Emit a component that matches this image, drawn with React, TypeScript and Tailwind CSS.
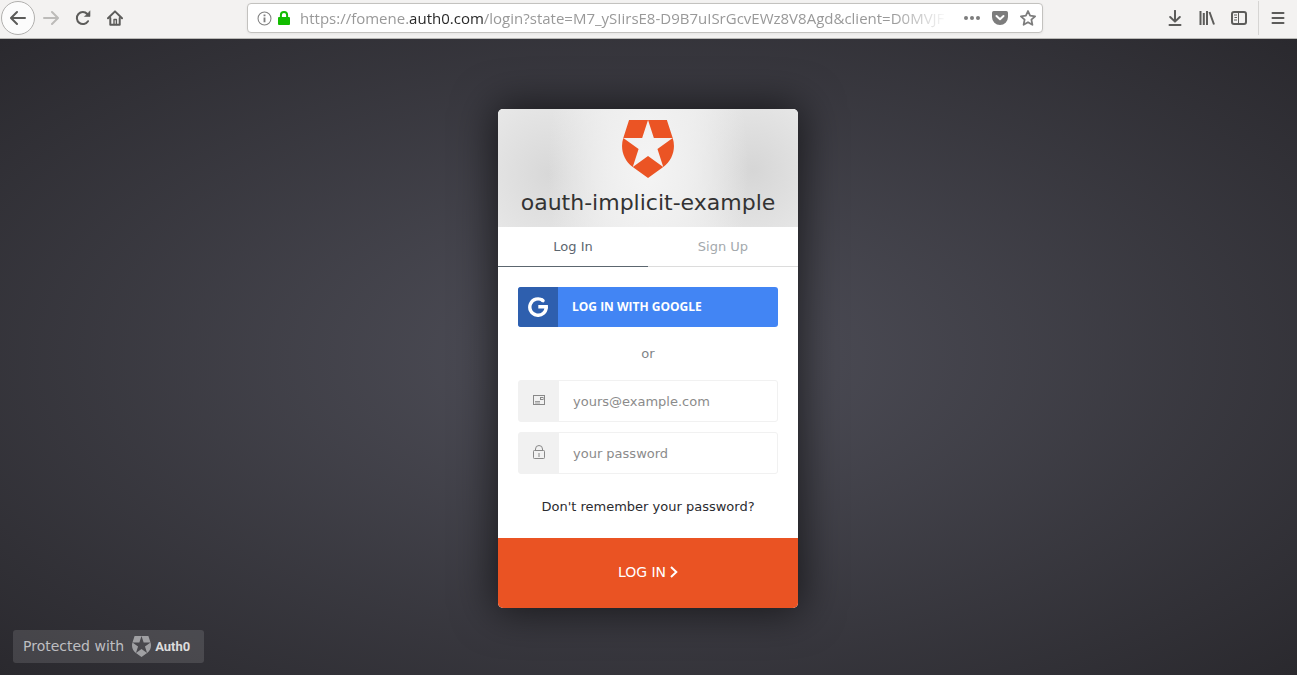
import React from "react";

function Auth0Mark({ className }: { className: string }) {
  return (
    <svg viewBox="1.5 0 21 24" preserveAspectRatio="none" fill="currentColor" className={className} aria-hidden="true">
      <path d="M21.98 7.448L19.62 0H4.347L2.02 7.448c-1.352 4.312.03 9.206 3.815 12.015L12.007 24l6.157-4.552c3.755-2.81 5.182-7.688 3.815-12.015l-6.16 4.58 2.343 7.45-6.157-4.597-6.158 4.58 2.358-7.433-6.188-4.55 7.63-.045L12.008 0l2.356 7.404 7.615.044z" />
    </svg>
  );
}

function ToolbarButton({ label, className = "", children }: { label: string; className?: string; children: React.ReactNode }) {
  return (
    <button type="button" aria-label={label} className={`flex h-8 w-8 shrink-0 items-center justify-center ${className}`}>
      <svg viewBox="0 0 16 16" className="h-4 w-4" fill="none" stroke="currentColor" strokeWidth="2" strokeLinecap="round" strokeLinejoin="round" aria-hidden="true">
        {children}
      </svg>
    </button>
  );
}

function BrowserToolbar() {
  return (
    <header className="flex h-[39px] items-center border-b border-[#b9b9b6] bg-[#f3f2f1] pb-[2px] text-[#5c5c5a]">
      <nav aria-label="Navigation" className="flex shrink-0 items-center pl-px">
        <button type="button" aria-label="Back" className="flex h-[34px] w-[34px] items-center justify-center rounded-full border border-[#b1b0ae] bg-[#fcfcfc]">
          <svg viewBox="0 0 16 16" className="h-4 w-4" fill="none" stroke="currentColor" strokeWidth="2" strokeLinecap="round" strokeLinejoin="round" aria-hidden="true">
            <path d="M15 8H1.5M7 2L1 8l6 6" />
          </svg>
        </button>
        <ToolbarButton label="Forward" className="text-[#bcbbb9]">
          <path d="M1 8h13.5M9 2l6 6-6 6" />
        </ToolbarButton>
        <ToolbarButton label="Reload">
          <path d="M13 11.2A6 6 0 1 1 12.3 4" />
          <path d="M15 1.2V6.5H9.8z" fill="currentColor" strokeWidth="0.6" />
        </ToolbarButton>
        <ToolbarButton label="Home">
          <path d="M1 8.3L8 1.4l7 6.9" />
          <path d="M3.3 8v6.8h9.4V8" />
          <path d="M7 14.5v-5h2.4v5" strokeWidth="1.4" />
        </ToolbarButton>
      </nav>

      <div className="mr-29 ml-29 flex h-[30px] min-w-0 flex-1 items-center rounded-[4px] border border-[#c3c2bf] bg-white pr-[6px] pl-[9px] shadow-[0_1px_3px_rgba(0,0,0,0.06)]">
        <svg viewBox="0 0 16 16" className="h-[15px] w-[15px] shrink-0 text-[#808080]" fill="none" stroke="currentColor" strokeWidth="1.1" aria-hidden="true">
          <circle cx="8" cy="8" r="6.9" />
          <path d="M8 7v5M8 3.7v2" strokeWidth="2" />
        </svg>
        <svg viewBox="0 0 12 14" className="mx-[6px] h-[14px] w-3 shrink-0" aria-hidden="true">
          <rect x="0" y="6" width="12" height="8" rx="1" fill="#12bc00" />
          <path d="M2.9 7V4.1a3.1 3.1 0 0 1 6.2 0V7" fill="none" stroke="#12bc00" strokeWidth="2" />
        </svg>
        <div
          role="textbox"
          aria-label="Address"
          tabIndex={0}
          className="mr-2 ml-1 min-w-0 flex-1 overflow-hidden whitespace-nowrap font-['Open_Sans',sans-serif] text-[15px] leading-5 text-[#999999] [mask-image:linear-gradient(to_left,transparent_8px,black_64px)]"
        >
          https://fomene.<span className="text-[#2a2a2a]">auth0.com</span>/login?state=M7_ySIirsE8-D9B7uISrGcvEWz8V8Agd&amp;client=D0MVJF
        </div>
        <div className="flex shrink-0 items-center gap-3 text-[#7d7d7d]">
          <button type="button" aria-label="Page actions">
            <svg viewBox="0 0 16 16" className="h-4 w-4" fill="currentColor" aria-hidden="true">
              <circle cx="2" cy="8" r="2" />
              <circle cx="8" cy="8" r="2" />
              <circle cx="14" cy="8" r="2" />
            </svg>
          </button>
          <button type="button" aria-label="Save to Pocket">
            <svg viewBox="0 0 16 16" className="h-4 w-4" aria-hidden="true">
              <path d="M1.7 1h12.6A1.7 1.7 0 0 1 16 2.7V7A8 8 0 0 1 0 7V2.7A1.7 1.7 0 0 1 1.7 1z" fill="currentColor" />
              <path d="M4.5 6L8 9.3 11.5 6" fill="none" stroke="white" strokeWidth="2" strokeLinecap="round" strokeLinejoin="round" />
            </svg>
          </button>
          <button type="button" aria-label="Bookmark this page">
            <svg viewBox="0 0 16 16" className="h-4 w-4" fill="none" stroke="currentColor" strokeWidth="1.8" strokeLinejoin="round" aria-hidden="true">
              <path d="M8 1l2.100 4.700 5 .6-3.700 3.400 1 5.100L8 12.200l-4.400 2.600 1-5.100L.9 6.300l5-.6z" />
            </svg>
          </button>
        </div>
      </div>

      <div className="flex h-[34px] shrink-0 items-center">
        <ToolbarButton label="Downloads">
          <path d="M8 0.800V11M3.200 7L8 11.600 12.800 7M2.500 15h11" />
        </ToolbarButton>
        <ToolbarButton label="Library">
          <path d="M1.500 1v14M4.800 3v12M8 1v14M10.500 2l4.500 12.500" strokeLinecap="butt" />
        </ToolbarButton>
        <ToolbarButton label="Sidebars">
          <rect x="1" y="2" width="14" height="12" rx="2" />
          <path d="M7.500 2v12" strokeWidth="1" />
          <path d="M3 5h3M3.500 7.500H6M3 10h3" strokeWidth="1" strokeLinecap="butt" />
        </ToolbarButton>
        <span className="ml-[3px] h-full w-px bg-[#d6d5d3]" />
        <ToolbarButton label="Open menu" className="mr-[3px] ml-[3px]">
          <path d="M2.500 3h11M2.500 8h11M2.500 13h11" />
        </ToolbarButton>
      </div>
    </header>
  );
}

function Field({ id, type, label, icon }: { id: string; type: string; label: string; icon: React.ReactNode }) {
  return (
    <div className="flex h-[42px] overflow-hidden rounded-[3px] border border-[#f1f1f1] bg-[#f1f1f1]">
      <label htmlFor={id} aria-label={label} className="flex w-10 shrink-0 items-center justify-center pb-[2px] text-[#888888]">
        {icon}
      </label>
      <input id={id} type={type} placeholder={label} className="min-w-0 flex-1 bg-white px-[14px] pt-[2px] text-[13px] text-[#333333] outline-none placeholder:text-[#8b8b8b]" />
    </div>
  );
}

function LoginCard() {
  return (
    <form onSubmit={(e) => e.preventDefault()} className="w-[300px] overflow-hidden rounded-[5px] bg-white shadow-[0_0_40px_4px_rgba(0,0,0,0.6)]">
      <div className="flex h-[118px] flex-col items-center bg-[#e8e8e8] bg-[radial-gradient(ellipse_100px_200px_at_50%_50%,#f4f4f4_0%,#f0f0f0_30%,transparent_100%),radial-gradient(ellipse_80px_85px_at_17%_55%,#d8d8d8,transparent),radial-gradient(ellipse_80px_85px_at_85%_52%,#d6d6d6,transparent)] pt-[11px]">
        <Auth0Mark className="h-[58px] w-[52px] text-[#eb5424]" />
        <h1 className="mt-[11px] text-[22px] leading-7 text-[#333333]">oauth-implicit-example</h1>
      </div>
      <div className="flex h-10 text-[13px]">
        <button type="button" className="flex-1 border-b border-[#5c666f] text-[#5c666f]">Log In</button>
        <button type="button" className="flex-1 border-b border-[#dcdcdc] text-[#a4a9ad]">Sign Up</button>
      </div>
      <div className="flex flex-col p-5 text-[13px]">
        <button type="button" className="flex h-10 items-center overflow-hidden rounded-[3px] bg-[#4285f4] text-white">
          <span className="flex h-10 w-10 items-center justify-center bg-[#2e5fae]">
            <svg viewBox="0 0 20 20" className="h-5 w-5" fill="none" stroke="currentColor" strokeWidth="3.400" aria-hidden="true">
              <path d="M14.900 3.500A8.200 8.200 0 1 0 18.200 9.600" strokeLinejoin="round" />
              <path d="M13.900 2.900L15 3.700" strokeLinecap="round" />
              <path d="M19.900 9.800H10.300" />
            </svg>
          </span>
          <span className="ml-[14px] font-['Open_Sans',sans-serif] text-[12px] font-bold">LOG IN WITH GOOGLE</span>
        </button>
        <p className="my-[17px] text-center leading-[19px] text-[#7f8488]">or</p>
        <div className="flex flex-col gap-[10px]">
          <Field
            id="email"
            type="email"
            label="yours@example.com"
            icon={
              <svg viewBox="0 0 12 10" className="h-[10px] w-3" fill="none" stroke="currentColor" strokeWidth="1" aria-hidden="true">
                <rect x="0.500" y="0.500" width="11" height="9" />
                <path d="M2 6.500h5M2 8h5" strokeWidth="0.800" />
                <rect x="7.500" y="2.500" width="2.500" height="2" />
              </svg>
            }
          />
          <Field
            id="password"
            type="password"
            label="your password"
            icon={
              <svg viewBox="0 0 12 14" className="h-[14px] w-3" fill="none" stroke="currentColor" strokeWidth="1" aria-hidden="true">
                <rect x="0.500" y="5.500" width="11" height="8" rx="0.800" />
                <path d="M2.500 5.500V4a3.500 3.500 0 0 1 7 0v1.500M6 8v4" />
              </svg>
            }
          />
        </div>
        <a href="#reset" className="mt-[23px] text-center leading-5 text-[#2b2b2f]">Don't remember your password?</a>
      </div>
      <button type="submit" className="mt-px flex h-[70px] w-full items-center justify-center gap-1 bg-[#ea5323] pb-[2px] text-[14px] text-white">
        LOG IN
        <svg viewBox="0 0 8 12" className="h-3 w-2" fill="none" stroke="currentColor" strokeWidth="2" aria-hidden="true">
          <path d="M1 1l5.300 5L1 11" />
        </svg>
      </button>
    </form>
  );
}

export default function App() {
  return (
    <div className="flex min-h-screen flex-col font-['DejaVu_Sans',sans-serif]">
      <BrowserToolbar />
      <main className="relative flex flex-1 items-start justify-center bg-[radial-gradient(#50505a,#2a292e)] px-4 pt-[70px] pr-[17px] pb-[67px]">
        <LoginCard />
        <a href="#auth0" className="absolute bottom-3 left-[13px] flex h-[33px] items-center rounded-[3px] bg-white/12 pr-[14px] pl-[10px] text-[14px] text-[#bebec1]">
          Protected with
          <Auth0Mark className="mr-1 ml-2 h-[21px] w-[19px] text-[#a0a0a3]" />
          <span className="font-['Roboto',sans-serif] text-[13px] font-bold text-[#dcdcdc]">Auth0</span>
        </a>
      </main>
    </div>
  );
}
